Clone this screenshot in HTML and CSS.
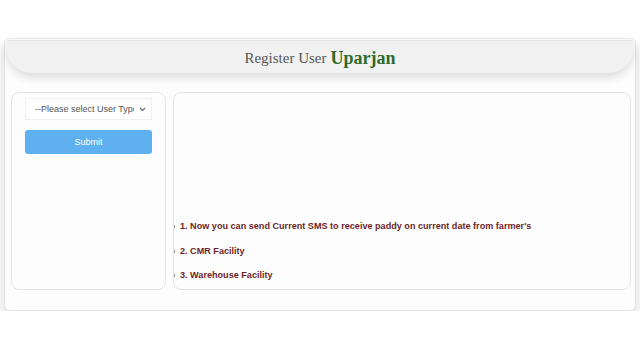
FILE: index.html
```html
<!DOCTYPE html>
<html>
<head>
<meta charset="utf-8">
<title>Register User Uparjan</title>
<link rel="stylesheet" href="styles.css">
</head>
<body>
<div class="card">
  <div class="header">
    <span class="title">Register User</span> <span class="brand">Uparjan</span>
  </div>
  <div class="row">
    <div class="panel left">
      <div class="select">
        <span class="select-text">--Please select User Type</span>
        <svg class="chev" width="7" height="5" viewBox="0 0 7 5"><path d="M1 1 L3.5 3.5 L6 1" fill="none" stroke="#666" stroke-width="1.1"/></svg>
      </div>
      <button class="submit">Submit</button>
    </div>
    <div class="panel right">
      <ul class="news">
        <li>1. Now you can send Current SMS to receive paddy on current date from farmer's</li>
        <li>2. CMR Facility</li>
        <li>3. Warehouse Facility</li>
      </ul>
    </div>
  </div>
</div>
</body>
</html>
```
FILE: styles.css
```css
html, body { margin: 0; padding: 0; background: #fff; }
body { font-family: "Liberation Sans", Arial, sans-serif; }

.card {
  margin: 38px 4px 0 4px;
  height: 273px;
  box-sizing: border-box;
  background: #fdfdfd;
  border: 1px solid #e6e6e6;
  border-radius: 6px;
  box-shadow: 0 8px 14px rgba(0,0,0,0.16);
  padding: 1px 1px 0 1px;
  display: flex;
  flex-direction: column;
}

.header {
  height: 33px;
  background: #f1f1f1;
  border-top: 1px solid #e4e4e4;
  border-radius: 4px 4px 26px 26px;
  box-shadow: 0 5px 9px rgba(0,0,0,0.12);
  display: flex;
  align-items: center;
  justify-content: center;
  gap: 4px;
  box-sizing: border-box;
  padding-top: 2px;
}
.title {
  font-family: "Liberation Serif", "Times New Roman", serif;
  font-size: 15px;
  color: #555;
}
.brand {
  font-family: "Liberation Serif", "Times New Roman", serif;
  font-weight: bold;
  font-size: 18px;
  color: #2f6a2a;
}

.row {
  display: flex;
  gap: 7px;
  margin: 19px 3px 0 5px;
  height: 198px;
}
.panel {
  box-sizing: border-box;
  border: 1px solid #e3e3e3;
  border-radius: 8px;
  background: #fdfdfd;
}
.left {
  width: 155px;
  padding: 5px 13px 0 13px;
  display: flex;
  flex-direction: column;
  gap: 10px;
}
.select {
  height: 22px;
  box-sizing: border-box;
  background: #fff;
  border: 1px solid #f0f0f0;
  display: flex;
  align-items: center;
  padding: 0 5px 0 9px;
  gap: 5px;
}
.select-text {
  flex: 1;
  white-space: nowrap;
  overflow: hidden;
  font-size: 9px;
  color: #555;
}
.chev { flex: none; }
.submit {
  height: 24px;
  border: none;
  border-radius: 3px;
  background: #5eb0ee;
  color: #fff;
  font-family: "Liberation Sans", Arial, sans-serif;
  font-size: 9px;
  padding: 0;
}

.right {
  flex: 1;
  display: flex;
  flex-direction: column;
  justify-content: flex-end;
  padding: 0 0 7px 0;
}
.news {
  list-style: none;
  margin: 0;
  padding: 0;
  display: flex;
  flex-direction: column;
  gap: 10.5px;
}
.news li {
  position: relative;
  padding-left: 6px;
  font-size: 9.1px;
  font-weight: bold;
  color: #6d1d26;
  line-height: 14px;
}
.news li::before {
  content: "";
  position: absolute;
  left: 0;
  top: 6px;
  width: 1px;
  height: 3px;
  background: #999;
}
```
